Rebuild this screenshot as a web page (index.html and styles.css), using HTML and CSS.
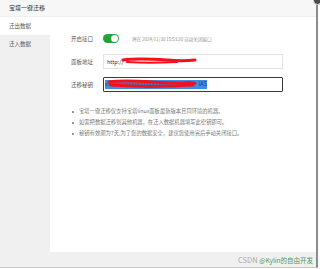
FILE: index.html
```html
<!DOCTYPE html>
<html>

<head>
    <meta name="viewport" content="width=device-width, initial-scale=1.0">
    <link rel="stylesheet" href="styles.css">
</head>

<body>
    <div class="dialog">
        <div class="dialog-title">宝塔一键迁移</div>
        <span class="close-btn"></span>

        <div class="dialog-body">
            <div class="tabs">
                <div class="tab active">迁出数据</div>
                <div class="tab">迁入数据</div>
            </div>

            <div class="content">
                <div class="form-row">
                    <div class="label">开启接口</div>
                    <span class="switch"><span class="knob"></span></span>
                    <span class="hint">将在 2024/11/30 15:53:20 自动关闭接口</span>
                </div>
                <div class="form-row">
                    <div class="label">面板地址</div>
                    <div class="input">
                        <span class="input-text">http://</span>
                        <svg class="scribble" width="90" height="13" viewBox="0 0 90 13">
                            <path d="M16 5 C30 3 45 4 60 5 C70 6 80 6 88 5" stroke="#f4121a" stroke-width="3" fill="none" stroke-linecap="round" />
                            <path d="M20 7 C35 8 50 8 70 7" stroke="#f4121a" stroke-width="2" fill="none" stroke-linecap="round" />
                        </svg>
                    </div>
                </div>
                <div class="form-row">
                    <div class="label">迁移秘钥</div>
                    <div class="input focused">
                        <span class="selected">xxxxxxxxxxxxxxxxxxxxxxxxxxxKF&nbsp;&nbsp;&nbsp;&nbsp;&nbsp;IAS</span>
                        <svg class="scribble" width="100" height="13" viewBox="0 0 100 13">
                            <path d="M2 4 C15 2 30 3 45 4 C60 5 75 5 88 5" stroke="#f4121a" stroke-width="3" fill="none" stroke-linecap="round" />
                            <path d="M4 7 C20 8 40 9 60 8 C70 8 78 7 86 7" stroke="#f4121a" stroke-width="3" fill="none" stroke-linecap="round" />
                        </svg>
                    </div>
                </div>

                <ul class="notes">
                    <li>宝塔一键迁移仅支持宝塔linux面板最新版本且同环境的机器。</li>
                    <li>如需把数据迁移到其他机器，在迁入数据机器填写此密钥即可。</li>
                    <li>秘钥有效期为7天,为了您的数据安全，建议您使用完后手动关闭接口。</li>
                </ul>
            </div>
        </div>

        <div class="dialog-foot">
            <span class="mark">CSDN <span class="mark-name">@Kylin的自由开发</span></span>
        </div>
    </div>
</body>

</html>
```

FILE: styles.css
```css
* {
    box-sizing: border-box;
}

body {
    margin: 0;
    width: 320px;
    height: 269px;
    overflow: hidden;
    background-color: white;
    font-family: "Noto Sans CJK SC", "Noto Sans", sans-serif;
    color: #555;
}

.dialog {
    position: relative;
    width: 318px;
    height: 268px;
    border-right: 2px solid #8c8c8c;
    border-bottom: 1px solid #c8c8c8;
    display: flex;
    flex-direction: column;
}

.dialog-title {
    height: 17px;
    line-height: 16px;
    padding-left: 9px;
    font-size: 6px;
    color: #333;
    background-color: #f7f7f7;
    border-bottom: 1px solid #eee;
}

.close-btn {
    position: absolute;
    right: -6px;
    top: -4px;
    width: 9px;
    height: 9px;
    border-radius: 50%;
    background-color: #4a4a4a;
    border: 1px solid #ddd;
}

.dialog-body {
    flex: 1;
    display: flex;
}

.tabs {
    width: 50px;
    background-color: #f0f0f0;
}

.tab {
    height: 18px;
    line-height: 18px;
    padding-left: 9px;
    font-size: 5.5px;
    color: #555;
}

.tab.active {
    background-color: white;
}

.content {
    flex: 1;
    padding: 14px 0 0 21px;
}

.form-row {
    display: flex;
    align-items: center;
    height: 15px;
    margin-bottom: 8px;
}

.label {
    width: 32px;
    font-size: 5.5px;
    color: #555;
}

.switch {
    position: relative;
    width: 16px;
    height: 9px;
    border-radius: 5px;
    background-color: #20a53a;
}

.knob {
    position: absolute;
    right: 1px;
    top: 1px;
    width: 7px;
    height: 7px;
    border-radius: 50%;
    background-color: white;
}

.hint {
    margin-left: 13px;
    font-size: 4.8px;
    letter-spacing: -0.2px;
    color: #999;
}

.input {
    position: relative;
    width: 180px;
    height: 15px;
    border: 1px solid #e3e3e3;
    padding-left: 3px;
    display: flex;
    align-items: center;
    font-size: 5.5px;
    color: #333;
}

.input.focused {
    border: 1.5px solid #3a3a3a;
    border-radius: 1px;
    padding-left: 1px;
}

.selected {
    background-color: #3f8ee6;
    color: #1c3f8a;
    line-height: 9px;
    letter-spacing: 0.2px;
}

.scribble {
    position: absolute;
    left: 3px;
    top: 0;
}

.notes {
    margin: 14px 0 0 0;
    padding: 0 0 0 8px;
    list-style: none;
}

.notes li {
    position: relative;
    height: 11px;
    line-height: 11px;
    font-size: 5.3px;
    color: #777;
}

.notes li::before {
    content: "";
    position: absolute;
    left: -7px;
    top: 5px;
    width: 1.5px;
    height: 1.5px;
    background-color: #999;
}

.dialog-foot {
    height: 15px;
    background-color: #f0f0f0;
    display: flex;
    justify-content: flex-end;
    align-items: center;
    padding-right: 3px;
}

.mark {
    font-size: 7.5px;
    color: #aaa;
}

.mark-name {
    font-size: 6.5px;
    color: #4f9a5c;
}
```
